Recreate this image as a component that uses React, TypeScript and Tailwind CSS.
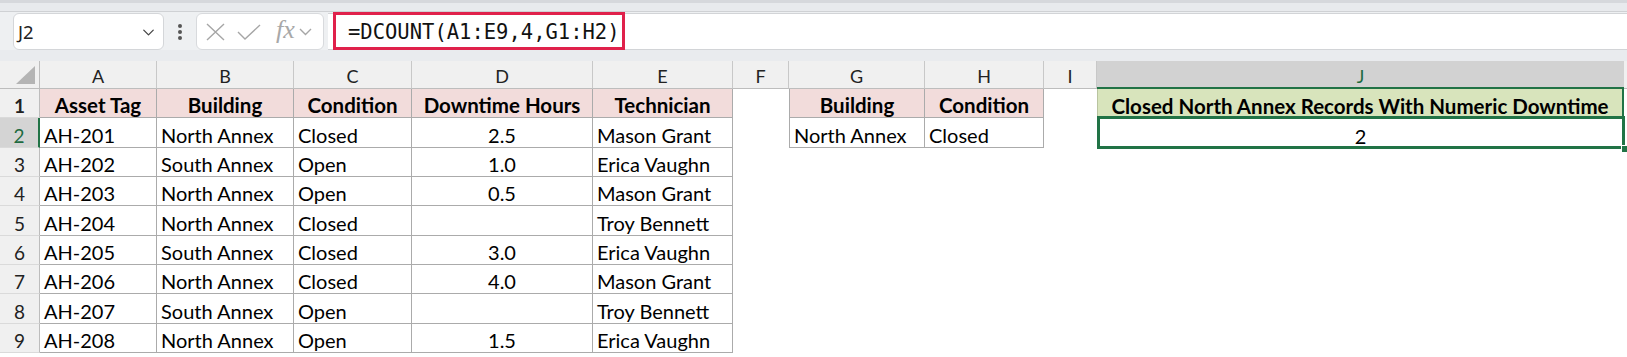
import { ChevronDown } from "lucide-react";

const data: string[][] = [
  ["AH-201", "North Annex", "Closed", "2.5", "Mason Grant"],
  ["AH-202", "South Annex", "Open", "1.0", "Erica Vaughn"],
  ["AH-203", "North Annex", "Open", "0.5", "Mason Grant"],
  ["AH-204", "North Annex", "Closed", "", "Troy Bennett"],
  ["AH-205", "South Annex", "Closed", "3.0", "Erica Vaughn"],
  ["AH-206", "North Annex", "Closed", "4.0", "Mason Grant"],
  ["AH-207", "South Annex", "Open", "", "Troy Bennett"],
  ["AH-208", "North Annex", "Open", "1.5", "Erica Vaughn"],
];

const W = [
  "w-[117px]",
  "w-[137px]",
  "w-[118px]",
  "w-[181px]",
  "w-[140px]",
  "w-[56px]",
  "w-[136px]",
  "w-[119px]",
  "w-[53px]",
  "w-[527px]",
];

const letters = ["A", "B", "C", "D", "E", "F", "G", "H", "I", "J"];

function RowHeader({ n }: { n: number }) {
  const sel = n === 2;
  return (
    <div
      className={
        "w-[40px] shrink-0 h-full flex items-end justify-center pb-[1px] leading-[21px] text-[19px] border-b border-[#dadada] " +
        (sel
          ? "bg-[#d4d4d4] text-[#1e6b41] border-r-2 border-r-[#217346]"
          : "bg-[#f0f0f0] text-[#222] border-r border-r-[#bdbdbd]")
      }
    >
      {n}
    </div>
  );
}

export default function App() {
  return (
    <div
      className="w-[1627px] h-[357px] overflow-hidden bg-white text-black"
      style={{ fontFamily: "Lato, 'Noto Sans', sans-serif" }}
    >
      {/* top strip */}
      <div className="h-[12px] bg-[#e8eaed] border-t-[3px] border-[#d6d8dc] border-b border-b-[#cfd1d4]" />
      {/* formula row */}
      <div className="h-[38px] flex items-center bg-[#eef0f2]">
        <div className="ml-[13px] w-[151px] h-[37px] bg-white border border-[#d4d6d9] rounded-[6px] flex items-center justify-between pl-[4px] pr-[5px]">
          <span
            className="text-[18.5px] text-[#222] relative top-[1px]"
            style={{ fontFamily: "'Noto Sans', sans-serif" }}
          >
            J2
          </span>
          <ChevronDown size={19} strokeWidth={1.6} className="text-[#444] relative top-[1px]" />
        </div>
        <div className="w-[32px] flex flex-col items-center gap-[2.5px] relative top-[1px]">
          <div className="w-[3.5px] h-[3.5px] rounded-full bg-[#555]" />
          <div className="w-[3.5px] h-[3.5px] rounded-full bg-[#555]" />
          <div className="w-[3.5px] h-[3.5px] rounded-full bg-[#555]" />
        </div>
        <div className="w-[128px] h-[37px] bg-white border border-[#d8dadd] rounded-[6px] flex items-center pl-[9px] text-[#a8a8a8]">
          <svg width="19" height="18" viewBox="0 0 19 18" className="relative top-[1px]">
            <path d="M1 1 L18 17 M18 1 L1 17" stroke="#a6a6a6" strokeWidth="1.4" fill="none" />
          </svg>
          <svg width="24" height="16" viewBox="0 0 24 16" className="ml-[12px] relative top-[1px]">
            <path d="M1 8 L8 15 L23 1" stroke="#a6a6a6" strokeWidth="1.4" fill="none" />
          </svg>
          <span
            className="ml-[15px] text-[26px] italic leading-none relative top-[-1px]"
            style={{ fontFamily: "'Liberation Serif', serif" }}
          >
            fx
          </span>
          <svg width="13" height="8" viewBox="0 0 13 8" className="ml-[4px] relative top-[1px]">
            <path d="M1 1 L6.5 6.5 L12 1" stroke="#a6a6a6" strokeWidth="1.4" fill="none" />
          </svg>
        </div>
        <div className="flex-1 h-[37px] ml-[4px] bg-white border-y border-[#d2d4d7] flex items-center">
          <div className="ml-[5px] w-[292px] h-[38px] border-[3px] border-[#e0214b] flex items-center pl-[12px]">
            <span
              className="text-[20.5px] text-[#111] leading-none relative top-[1px]"
              style={{ fontFamily: "'DejaVu Sans Mono', monospace" }}
            >
              =DCOUNT(A1:E9,4,G1:H2)
            </span>
          </div>
        </div>
      </div>
      {/* gap */}
      <div className="h-[11px] bg-[#e9ebee]" />

      <div className="text-[20px] leading-[21px]">
        {/* column header row */}
        <div className="h-[28px] flex bg-[#f0f0f0] text-[18px] leading-[22px] text-[#222]">
          <div className="w-[40px] shrink-0 h-full border-r border-b border-[#bdbdbd] relative">
            <svg className="absolute left-0 top-0" width="40" height="28">
              <polygon points="16,23 35,23 35,5" fill="#b4b4b4" />
            </svg>
          </div>
          {letters.map((l, i) =>
            l === "J" ? (
              <div
                key={l}
                className={W[i] + " shrink-0 h-full flex items-center justify-center pt-[3px] bg-[#d2d2d2] text-[#1e6b41] border-b-2 border-[#217346]"}
              >
                {l}
              </div>
            ) : (
              <div
                key={l}
                className={W[i] + " shrink-0 h-full flex items-center justify-center pt-[3px] border-r border-[#c8c8c8] border-b border-b-[#bdbdbd]"}
              >
                {l}
              </div>
            )
          )}
          <div className="flex-1 border-b border-[#bdbdbd]" />
        </div>

        {/* row 1 */}
        <div className="h-[29.33px] flex font-bold text-[20.5px]">
          <RowHeader n={1} />
          {["Asset Tag", "Building", "Condition", "Downtime Hours", "Technician"].map((t, i) => (
            <div
              key={t}
              className={W[i] + " shrink-0 h-full bg-[#f2dcdb] border-r border-b border-[#ababab] flex items-end justify-center pb-[1px] whitespace-nowrap"}
            >
              {t}
            </div>
          ))}
          <div className={W[5] + " shrink-0"} />
          <div className={W[6] + " shrink-0 h-full bg-[#f2dcdb] border-l border-r border-b border-[#ababab] flex items-end justify-center pb-[1px]"}>
            Building
          </div>
          <div className={W[7] + " shrink-0 h-full bg-[#f2dcdb] border-r border-b border-[#ababab] flex items-end justify-center pb-[1px]"}>
            Condition
          </div>
          <div className={W[8] + " shrink-0"} />
          <div className={W[9] + " shrink-0 h-full bg-[#d8e4bc] border-l border-l-[#b9c4a0] border-r-2 border-r-[#217346] flex items-end justify-center pb-[1px] whitespace-nowrap"}>
            Closed North Annex Records With Numeric Downtime
          </div>
        </div>

        {/* data rows */}
        {data.map((r, ri) => {
          const n = ri + 2;
          return (
            <div key={n} className="h-[29.33px] flex">
              <RowHeader n={n} />
              {r.map((t, i) => (
                <div
                  key={i}
                  className={
                    W[i] +
                    " shrink-0 h-full border-r border-b border-[#ababab] flex items-end pb-[1px] whitespace-nowrap " +
                    (i === 3 ? "justify-center" : "pl-[4px]")
                  }
                >
                  {t}
                </div>
              ))}
              <div className={W[5] + " shrink-0"} />
              {n === 2 ? (
                <>
                  <div className={W[6] + " shrink-0 h-full border-l border-r border-b border-[#ababab] flex items-end pb-[1px] pl-[4px]"}>
                    North Annex
                  </div>
                  <div className={W[7] + " shrink-0 h-full border-r border-b border-[#ababab] flex items-end pb-[1px] pl-[4px]"}>
                    Closed
                  </div>
                  <div className={W[8] + " shrink-0"} />
                  <div className={W[9] + " shrink-0 h-full relative flex items-end justify-center pb-[1px]"}>
                    2
                    <div className="absolute left-0 right-[-1px] top-[-2px] bottom-[-1px] border-[3px] border-[#217346] pointer-events-none" />
                    <div className="absolute right-[-5px] bottom-[-5px] w-[8px] h-[8px] bg-[#217346] border border-white" />
                  </div>
                </>
              ) : (
                <>
                  <div className={W[6] + " shrink-0"} />
                  <div className={W[7] + " shrink-0"} />
                  <div className={W[8] + " shrink-0"} />
                  <div className={W[9] + " shrink-0"} />
                </>
              )}
              <div className="flex-1" />
            </div>
          );
        })}
      </div>
    </div>
  );
}
